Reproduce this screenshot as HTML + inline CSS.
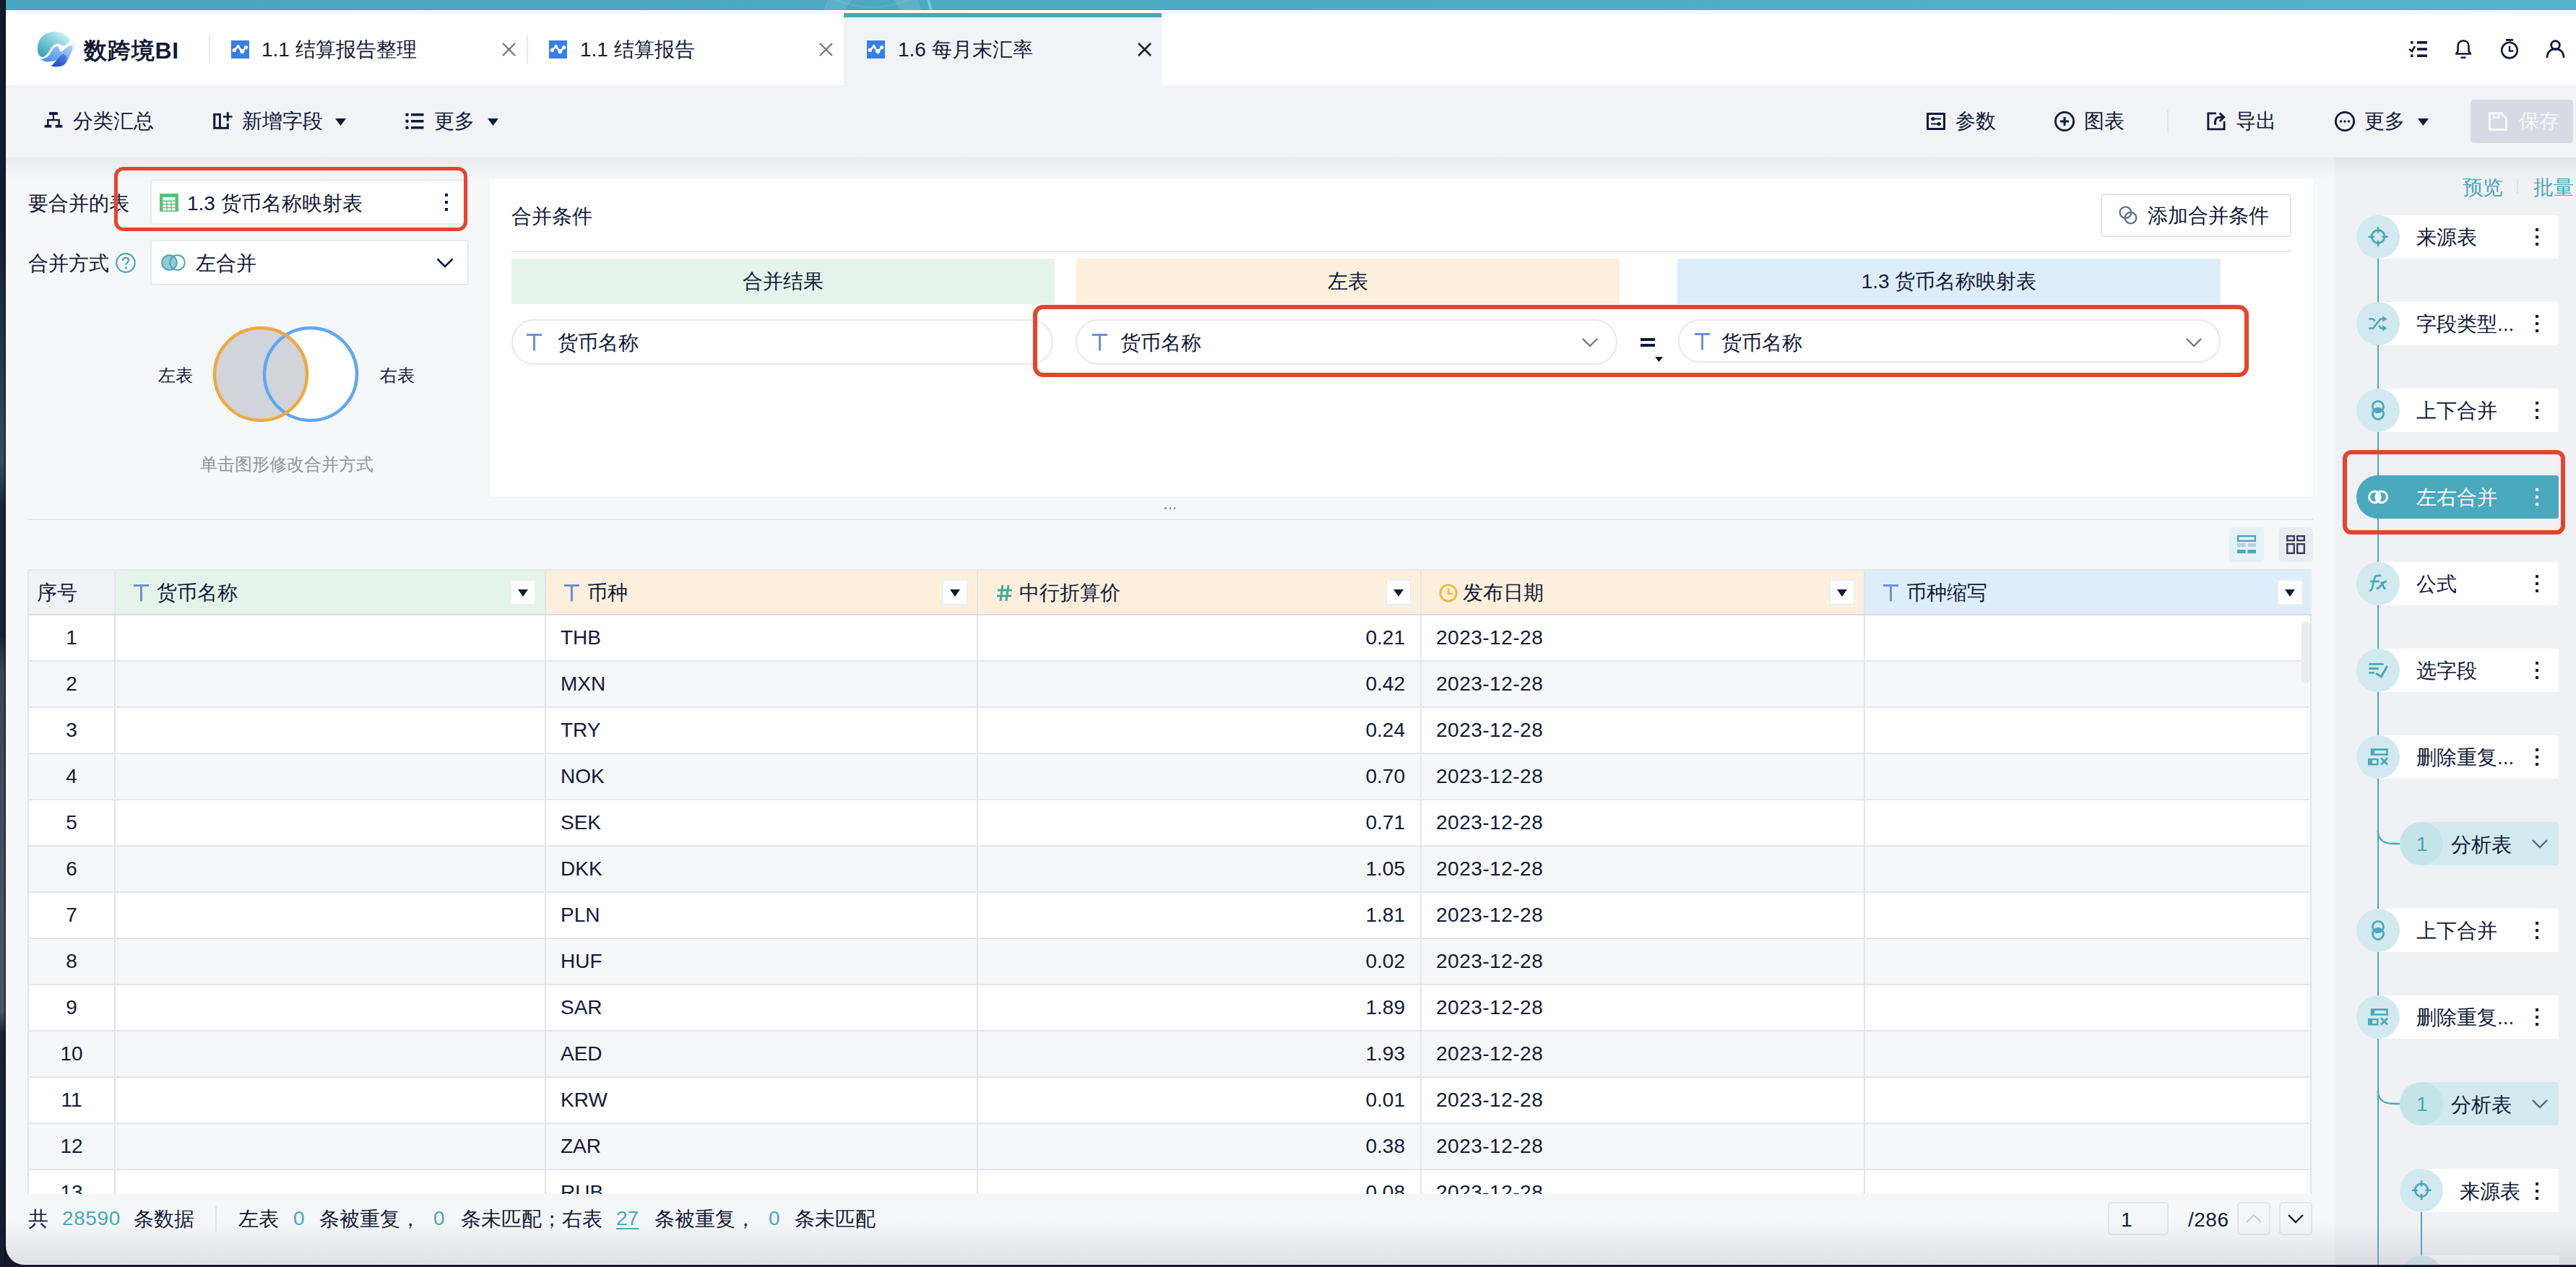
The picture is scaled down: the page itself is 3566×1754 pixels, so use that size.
<!DOCTYPE html><html><head><meta charset="utf-8"><style>
*{margin:0;padding:0;box-sizing:border-box}
html,body{width:3566px;height:1754px;overflow:hidden}
body{background:#131b2c;font-family:"Liberation Sans",sans-serif;position:relative}
.t{position:absolute;white-space:nowrap;line-height:32px}
svg{position:absolute;overflow:visible}
</style></head><body>
<div style="position:absolute;left:0px;top:0px;width:8px;height:1754px;background:linear-gradient(180deg,#121a2c 0px,#141d30 300px,#253349 480px,#3a4a5e 640px,#1c2538 700px,#1a2236 880px,#3d4457 930px,#4a5064 1250px,#4e5467 1400px,#1a2233 1430px,#151d2d 1754px)"></div>
<div style="position:absolute;left:6px;top:0px;width:2px;height:1754px;background:rgba(0,5,20,0.55)"></div>
<div style="position:absolute;left:8px;top:0px;width:3558px;height:1751px;background:#f6f7f9;border-bottom-left-radius:26px;overflow:hidden"></div>
<div style="position:absolute;left:8px;top:218px;width:3558px;height:30px;background:linear-gradient(180deg,rgba(20,30,70,0.055),rgba(20,30,70,0))"></div>
<div style="position:absolute;left:8px;top:0px;width:3558px;height:14px;background:linear-gradient(90deg,#4aa3bf,#4ea9c2 40%,#52b4ca)"></div>
<svg style="left:8px;top:0" width="3558" height="14" viewBox="0 0 3558 14"><circle cx="1200" cy="30" r="55" fill="none" stroke="rgba(255,255,255,0.10)" stroke-width="28"/><path d="M1277 0 L1281 14" stroke="rgba(160,235,240,0.45)" stroke-width="4"/><circle cx="1200" cy="-120" r="130" fill="none" stroke="rgba(255,255,255,0.06)" stroke-width="3"/></svg>
<div style="position:absolute;left:8px;top:14px;width:3558px;height:104px;background:#fff"></div>
<div style="position:absolute;left:8px;top:118px;width:3558px;height:100px;background:#f2f3f7"></div>
<svg style="left:40px;top:36px" width="64" height="64" viewBox="0 0 64 64">
<defs><linearGradient id="lg1" x1="0.1" y1="0.9" x2="0.9" y2="0.1"><stop offset="0" stop-color="#3ea6b8"/><stop offset="0.5" stop-color="#7ccdd9"/><stop offset="1" stop-color="#cdf3f5"/></linearGradient>
<linearGradient id="lg2" x1="0" y1="1" x2="1" y2="0"><stop offset="0" stop-color="#2f7bef"/><stop offset="1" stop-color="#b4d3fa"/></linearGradient>
<linearGradient id="lg3" x1="0" y1="1" x2="1" y2="0"><stop offset="0" stop-color="#1d3fb8"/><stop offset="1" stop-color="#5b87e0"/></linearGradient></defs>
<path d="M13.6 39.4 C11.5 35 11.5 28 13 24 C16 13 26 7.8 35 7.8 C45 7.8 54 13 57.6 21.7 C54 23 51 27 48 27.5 C45 27.8 43 24.5 40.4 24.5 C36 24.5 33 27 30 32 C27 37 23 43 19 43 C16.5 43 14.8 41.5 13.6 39.4 Z" fill="url(#lg1)"/>
<path d="M16.7 45.5 C20 46 25 44.5 29 39 C32 34 35 28.3 38.8 28.3 C42 28.3 42 32 42.8 35 C45.5 36.5 49 33 52 30 C55 27.5 57.5 26.2 60 26.8 C62.5 28 60 35 57 40.4 C55 46 52 52 46 55 C40 57 33 56.5 30.3 55.6 C33 53.5 36 50 39 47.8 C33 48.5 28 50 23.7 49.3 C20.5 48.8 18 47.5 16.7 45.5 Z" fill="url(#lg2)"/>
<path d="M31 55.6 C36 52 39 45 45.5 39.4 C49 38 52 41 52.5 44 C53 49 51 53 46 55 C41 56.8 35 56.5 31 55.6 Z" fill="url(#lg3)"/>
</svg>
<div class="t" style="left:116px;top:54.0px;font-size:32px;color:#141a36;font-weight:bold;letter-spacing:0.8px">数跨境BI</div>
<div style="position:absolute;left:289px;top:48px;width:2px;height:40px;background:#e8e9ee"></div>
<svg style="left:320px;top:55.5px" width="25" height="25" viewBox="0 0 25 25">
<rect width="25" height="25" fill="#3580e6"/>
<path d="M4.3 13.4 L9.6 8.3 L15.3 15.1 L20.6 9.7" fill="none" stroke="#fff" stroke-width="2.6" stroke-linejoin="round"/>
<circle cx="4.3" cy="13.4" r="2.7" fill="#fff"/><circle cx="9.6" cy="8.3" r="2.2" fill="#fff"/><circle cx="15.3" cy="15.1" r="3.1" fill="#fff"/><circle cx="20.6" cy="9.7" r="2.6" fill="#fff"/>
</svg>
<div class="t" style="left:362px;top:53.0px;font-size:28px;color:#121938;font-weight:normal;">1.1 结算报告整理</div>
<svg style="left:695px;top:59px" width="19" height="19" viewBox="0 0 19 19">
<path d="M1 1 L18 18 M18 1 L1 18" stroke="#6e7287" stroke-width="2.2"/></svg>
<div style="position:absolute;left:729px;top:48px;width:2px;height:40px;background:#e8e9ee"></div>
<svg style="left:760px;top:55.5px" width="25" height="25" viewBox="0 0 25 25">
<rect width="25" height="25" fill="#3580e6"/>
<path d="M4.3 13.4 L9.6 8.3 L15.3 15.1 L20.6 9.7" fill="none" stroke="#fff" stroke-width="2.6" stroke-linejoin="round"/>
<circle cx="4.3" cy="13.4" r="2.7" fill="#fff"/><circle cx="9.6" cy="8.3" r="2.2" fill="#fff"/><circle cx="15.3" cy="15.1" r="3.1" fill="#fff"/><circle cx="20.6" cy="9.7" r="2.6" fill="#fff"/>
</svg>
<div class="t" style="left:803px;top:53.0px;font-size:28px;color:#121938;font-weight:normal;">1.1 结算报告</div>
<svg style="left:1134px;top:59px" width="19" height="19" viewBox="0 0 19 19">
<path d="M1 1 L18 18 M18 1 L1 18" stroke="#6e7287" stroke-width="2.2"/></svg>
<div style="position:absolute;left:1168px;top:18px;width:440px;height:100px;background:#f2f3f7"></div>
<div style="position:absolute;left:1168px;top:18px;width:440px;height:6px;background:#4aa6bb"></div>
<svg style="left:1199.6px;top:55.5px" width="25" height="25" viewBox="0 0 25 25">
<rect width="25" height="25" fill="#3580e6"/>
<path d="M4.3 13.4 L9.6 8.3 L15.3 15.1 L20.6 9.7" fill="none" stroke="#fff" stroke-width="2.6" stroke-linejoin="round"/>
<circle cx="4.3" cy="13.4" r="2.7" fill="#fff"/><circle cx="9.6" cy="8.3" r="2.2" fill="#fff"/><circle cx="15.3" cy="15.1" r="3.1" fill="#fff"/><circle cx="20.6" cy="9.7" r="2.6" fill="#fff"/>
</svg>
<div class="t" style="left:1243px;top:53.0px;font-size:28px;color:#121938;font-weight:normal;">1.6 每月末汇率</div>
<svg style="left:1575px;top:59px" width="19" height="19" viewBox="0 0 19 19">
<path d="M1 1 L18 18 M18 1 L1 18" stroke="#1b1f3b" stroke-width="2.6"/></svg>
<svg style="left:3334px;top:56px" width="27" height="24" viewBox="0 0 27 24">
<rect x="3" y="1" width="3.6" height="3.6" fill="#121938"/><rect x="3" y="19.4" width="3.6" height="3.6" fill="#121938"/>
<rect x="12" y="1" width="14" height="3.6" fill="#121938"/><rect x="12" y="10.2" width="14" height="3.6" fill="#121938"/><rect x="12" y="19.4" width="14" height="3.6" fill="#121938"/>
<path d="M1 12 L5 15 L9 8" fill="none" stroke="#121938" stroke-width="2.6"/></svg>
<svg style="left:3398px;top:55px" width="24" height="26" viewBox="0 0 24 26">
<path d="M2 19.5 L4.5 16 L4.5 9 C4.5 4.5 7.5 1.3 12 1.3 C16.5 1.3 19.5 4.5 19.5 9 L19.5 16 L22 19.5 Z" fill="none" stroke="#121938" stroke-width="2.6" stroke-linejoin="round"/>
<rect x="8.5" y="23.5" width="7" height="2.4" fill="#121938"/></svg>
<svg style="left:3461px;top:54px" width="26" height="28" viewBox="0 0 26 28">
<rect x="8" y="0" width="10" height="2.8" fill="#121938"/>
<circle cx="13" cy="15.6" r="10.8" fill="none" stroke="#121938" stroke-width="2.6"/>
<path d="M13 10 L13 16.6 L18.5 16.6" fill="none" stroke="#121938" stroke-width="2.4"/></svg>
<svg style="left:3524px;top:55px" width="27" height="26" viewBox="0 0 27 26">
<circle cx="13.5" cy="7.5" r="5.9" fill="none" stroke="#121938" stroke-width="2.7"/>
<path d="M2 25 C2 17 7 12.6 13.5 12.6 C20 12.6 25 17 25 25" fill="none" stroke="#121938" stroke-width="2.7"/></svg>
<svg style="left:56px;top:150px" width="36" height="32" viewBox="0 0 36 32">
<rect x="12" y="5.2" width="11.9" height="3.8" fill="#121938"/><rect x="16.9" y="8" width="2.1" height="8" fill="#121938"/>
<rect x="9.1" y="15" width="17.7" height="2.3" fill="#121938"/>
<rect x="9.1" y="15" width="2.5" height="9" fill="#121938"/><rect x="24.3" y="15" width="2.5" height="9" fill="#121938"/>
<rect x="5.6" y="22.9" width="9.7" height="3.7" fill="#121938"/><rect x="20.7" y="22.9" width="9.7" height="3.7" fill="#121938"/></svg>
<div class="t" style="left:101px;top:152.0px;font-size:28px;color:#121938;font-weight:normal;">分类汇总</div>
<svg style="left:290px;top:150px" width="40" height="35" viewBox="0 0 40 35">
<path fill-rule="evenodd" d="M5.2 7 L15.9 7 L15.9 25.8 L23.8 25.8 L23.8 21 L26.8 21 L26.8 28.7 L5.2 28.7 Z M8.3 9.8 L13 9.8 L13 25.8 L8.3 25.8 Z" fill="#121938"/>
<rect x="23.8" y="5.2" width="3" height="12.5" fill="#121938"/><rect x="19" y="10.2" width="12.5" height="2.6" fill="#121938"/></svg>
<div class="t" style="left:335px;top:152.0px;font-size:28px;color:#121938;font-weight:normal;">新增字段</div>
<svg style="left:464px;top:164px" width="15" height="10" viewBox="0 0 15 10"><path d="M0 0 L15 0 L7.5 10 Z" fill="#121938"/></svg>
<svg style="left:561px;top:156px" width="26" height="24" viewBox="0 0 26 24">
<circle cx="2.5" cy="2.8" r="2.3" fill="#121938"/><circle cx="2.5" cy="11.8" r="2.3" fill="#121938"/><circle cx="2.5" cy="20.8" r="2.3" fill="#121938"/>
<rect x="8" y="1" width="17.5" height="3.5" fill="#121938"/><rect x="8" y="10" width="17.5" height="3.5" fill="#121938"/><rect x="8" y="19" width="17.5" height="3.5" fill="#121938"/></svg>
<div class="t" style="left:601px;top:152.0px;font-size:28px;color:#121938;font-weight:normal;">更多</div>
<svg style="left:675px;top:164px" width="15" height="10" viewBox="0 0 15 10"><path d="M0 0 L15 0 L7.5 10 Z" fill="#121938"/></svg>
<svg style="left:2667px;top:156px" width="26" height="24" viewBox="0 0 26 24">
<rect x="1.5" y="1.5" width="23" height="21" fill="none" stroke="#121938" stroke-width="3"/>
<path d="M6 8.5 L20 8.5 M6 15.5 L20 15.5" stroke="#121938" stroke-width="2.2"/>
<circle cx="9" cy="8.5" r="2.5" fill="#121938"/><circle cx="17" cy="15.5" r="2.5" fill="#121938"/></svg>
<div class="t" style="left:2707px;top:152.0px;font-size:28px;color:#121938;font-weight:normal;">参数</div>
<svg style="left:2844px;top:154px" width="28" height="28" viewBox="0 0 28 28">
<circle cx="14" cy="14" r="12.6" fill="none" stroke="#121938" stroke-width="2.8"/>
<path d="M14 8 L14 20 M8 14 L20 14" stroke="#121938" stroke-width="3"/></svg>
<div class="t" style="left:2885px;top:152.0px;font-size:28px;color:#121938;font-weight:normal;">图表</div>
<div style="position:absolute;left:3000px;top:152px;width:2px;height:32px;background:#e3e5ea"></div>
<svg style="left:3050px;top:150px" width="36" height="36" viewBox="0 0 36 36">
<path d="M17.9 6.85 L6.8 6.85 L6.8 28.85 L29.1 28.85 L29.1 18" fill="none" stroke="#121938" stroke-width="2.8"/>
<path d="M16.5 22.8 L16.5 18.5 C16.5 14.5 19 12.2 23 12.2 L28.5 12.2" fill="none" stroke="#121938" stroke-width="3"/>
<path d="M22.7 6.5 L28.6 12.2 L22.7 17.9" fill="none" stroke="#121938" stroke-width="3"/></svg>
<div class="t" style="left:3095px;top:152.0px;font-size:28px;color:#121938;font-weight:normal;">导出</div>
<svg style="left:3232px;top:154px" width="28" height="28" viewBox="0 0 28 28">
<circle cx="14" cy="14" r="12.6" fill="none" stroke="#121938" stroke-width="2.8"/>
<circle cx="8.5" cy="14" r="1.7" fill="#121938"/><circle cx="14" cy="14" r="1.7" fill="#121938"/><circle cx="19.5" cy="14" r="1.7" fill="#121938"/></svg>
<div class="t" style="left:3273px;top:152.0px;font-size:28px;color:#121938;font-weight:normal;">更多</div>
<svg style="left:3347px;top:164px" width="15" height="10" viewBox="0 0 15 10"><path d="M0 0 L15 0 L7.5 10 Z" fill="#121938"/></svg>
<div style="position:absolute;left:3420px;top:138px;width:142px;height:60px;background:#d7dae2;border-radius:5px"></div>
<svg style="left:3445px;top:155px" width="26" height="26" viewBox="0 0 26 26">
<path d="M1.5 1.5 L17 1.5 L24.5 9 L24.5 24.5 L1.5 24.5 Z" fill="none" stroke="#f7f8fa" stroke-width="3"/>
<path d="M7 1.5 L7 8 L14 8 L14 1.5" fill="none" stroke="#f7f8fa" stroke-width="2.6"/></svg>
<div class="t" style="left:3487px;top:152.0px;font-size:28px;color:#f7f8fa;font-weight:normal;">保存</div>
<div class="t" style="left:39px;top:266.0px;font-size:28px;color:#121938;font-weight:normal;">要合并的表</div>
<div style="position:absolute;left:208px;top:248px;width:441px;height:63px;background:#fff;border:2px solid #e6e8ed;border-radius:4px"></div>
<svg style="left:221px;top:268px" width="26" height="25" viewBox="0 0 26 25">
<rect width="26" height="25" fill="#5dbf77"/>
<rect x="4.5" y="5" width="17" height="4.5" fill="#fff"/>
<rect x="4.5" y="11" width="4.8" height="3.2" fill="#fff"/><rect x="10.6" y="11" width="4.8" height="3.2" fill="#fff"/><rect x="16.7" y="11" width="4.8" height="3.2" fill="#fff"/>
<rect x="4.5" y="15.6" width="4.8" height="3.2" fill="#fff"/><rect x="10.6" y="15.6" width="4.8" height="3.2" fill="#fff"/><rect x="16.7" y="15.6" width="4.8" height="3.2" fill="#fff"/>
<rect x="4.5" y="20.2" width="4.8" height="3.2" fill="#fff"/><rect x="10.6" y="20.2" width="4.8" height="3.2" fill="#fff"/><rect x="16.7" y="20.2" width="4.8" height="3.2" fill="#fff"/>
</svg>
<div class="t" style="left:259px;top:266.0px;font-size:28px;color:#121938;font-weight:normal;">1.3 货币名称映射表</div>
<div style="position:absolute;left:616px;top:268px;width:3.8px;height:3.8px;background:#121938"></div>
<div style="position:absolute;left:616px;top:278px;width:3.8px;height:3.8px;background:#121938"></div>
<div style="position:absolute;left:616px;top:288px;width:3.8px;height:3.8px;background:#121938"></div>
<div style="position:absolute;left:158px;top:231px;width:489px;height:89px;border:5.5px solid #e8432d;border-radius:13px"></div>
<div class="t" style="left:39px;top:349.0px;font-size:28px;color:#121938;font-weight:normal;">合并方式</div>
<svg style="left:160px;top:350px" width="28" height="28" viewBox="0 0 28 28">
<circle cx="14" cy="14" r="12.8" fill="none" stroke="#4ba7ba" stroke-width="2.2"/>
<path d="M10 11 C10 8.3 11.8 6.8 14 6.8 C16.3 6.8 18 8.3 18 10.6 C18 13.2 14.4 13.6 14.4 16.8" fill="none" stroke="#4ba7ba" stroke-width="2.3"/>
<circle cx="14.3" cy="20.8" r="1.6" fill="#4ba7ba"/></svg>
<div style="position:absolute;left:208px;top:332px;width:441px;height:63px;background:#fff;border:2px solid #e6e8ed;border-radius:4px"></div>
<svg style="left:223px;top:352px" width="34" height="23" viewBox="0 0 34 23">
<circle cx="11.5" cy="11.5" r="10.3" fill="#93cbd4" stroke="#4ba7ba" stroke-width="2"/>
<circle cx="22.5" cy="11.5" r="10.3" fill="none" stroke="#4ba7ba" stroke-width="2"/></svg>
<div class="t" style="left:271px;top:349.0px;font-size:28px;color:#121938;font-weight:normal;">左合并</div>
<svg style="left:604px;top:357px" width="24" height="14" viewBox="0 0 24 14">
<path d="M1.5 1.5 L12 12 L22.5 1.5" fill="none" stroke="#121938" stroke-width="2.6"/></svg>
<svg style="left:290px;top:446px" width="212" height="144" viewBox="0 0 212 144">
<defs><clipPath id="cl"><circle cx="71" cy="72" r="64"/></clipPath></defs>
<circle cx="71" cy="72" r="64" fill="#d1d4db"/>
<circle cx="140" cy="72" r="64" fill="#fff"/>
<circle cx="140" cy="72" r="64" fill="#d1d4db" clip-path="url(#cl)"/>
<circle cx="140" cy="72" r="64" fill="none" stroke="#5ea8f2" stroke-width="4.5"/>
<circle cx="71" cy="72" r="64" fill="none" stroke="#f0a93f" stroke-width="4.5" clip-path="none"/>
</svg>
<div class="t" style="left:219px;top:504.0px;font-size:24px;color:#121938;font-weight:normal;">左表</div>
<div class="t" style="left:526px;top:504.0px;font-size:24px;color:#121938;font-weight:normal;">右表</div>
<div class="t" style="left:277px;top:627.0px;font-size:24px;color:#8e94a3;font-weight:normal;">单击图形修改合并方式</div>
<div style="position:absolute;left:678px;top:248px;width:2524px;height:440px;background:#fff"></div>
<div class="t" style="left:708px;top:284.0px;font-size:28px;color:#121938;font-weight:normal;">合并条件</div>
<div style="position:absolute;left:2908px;top:268px;width:264px;height:60px;background:#fff;border:2px solid #e0e2e8;border-radius:5px"></div>
<svg style="left:2932px;top:284px" width="28" height="28" viewBox="0 0 28 28">
<circle cx="10.4" cy="10.2" r="7.8" fill="none" stroke="#6c7188" stroke-width="2.4"/>
<circle cx="17.5" cy="17.6" r="7.8" fill="none" stroke="#6c7188" stroke-width="2.4"/></svg>
<div class="t" style="left:2973px;top:283.0px;font-size:28px;color:#121938;font-weight:normal;">添加合并条件</div>
<div style="position:absolute;left:708px;top:347px;width:2464px;height:2px;background:#e6e8ed"></div>
<div style="position:absolute;left:708px;top:358px;width:752px;height:63px;background:#e5f4ea"></div>
<div style="position:absolute;left:1490px;top:358px;width:752px;height:63px;background:#fcf0dd"></div>
<div style="position:absolute;left:2322px;top:358px;width:752px;height:63px;background:#ddeefa"></div>
<div class="t" style="left:708px;top:374px;width:752px;text-align:center;font-size:28px;color:#121938">合并结果</div>
<div class="t" style="left:1490px;top:374px;width:752px;text-align:center;font-size:28px;color:#121938">左表</div>
<div class="t" style="left:2322px;top:374px;width:752px;text-align:center;font-size:28px;color:#121938">1.3 货币名称映射表</div>
<div style="position:absolute;left:708px;top:442px;width:750px;height:63px;background:#fff;border:2px solid #e6e8ed;border-radius:31.5px"></div>
<svg style="left:729px;top:462px" width="22" height="24" viewBox="0 0 22 24">
<path d="M0 1.5 L21 1.5 M10.5 1.5 L10.5 23.5" fill="none" stroke="#6a90d8" stroke-width="3"/></svg>
<div class="t" style="left:772px;top:459.0px;font-size:28px;color:#121938;font-weight:normal;">货币名称</div>
<div style="position:absolute;left:1489px;top:442px;width:750px;height:63px;background:#fff;border:2px solid #e6e8ed;border-radius:31.5px"></div>
<svg style="left:1512px;top:462px" width="22" height="24" viewBox="0 0 22 24">
<path d="M0 1.5 L21 1.5 M10.5 1.5 L10.5 23.5" fill="none" stroke="#6a90d8" stroke-width="3"/></svg>
<div class="t" style="left:1551px;top:459.0px;font-size:28px;color:#121938;font-weight:normal;">货币名称</div>
<svg style="left:2190px;top:468px" width="22" height="12" viewBox="0 0 22 12">
<path d="M1 1 L11.0 11 L21 1" fill="none" stroke="#6b7086" stroke-width="2.2"/></svg>
<div style="position:absolute;left:2271px;top:468px;width:20px;height:3.6px;background:#121938"></div>
<div style="position:absolute;left:2271px;top:476px;width:20px;height:3.6px;background:#121938"></div>
<svg style="left:2291px;top:494px" width="11" height="7" viewBox="0 0 11 7"><path d="M0 0 L11 0 L5.5 7 Z" fill="#121938"/></svg>
<div style="position:absolute;left:2323px;top:442px;width:751px;height:60px;background:#fff;border:2px solid #e6e8ed;border-radius:30.0px"></div>
<svg style="left:2346px;top:461px" width="22" height="24" viewBox="0 0 22 24">
<path d="M0 1.5 L21 1.5 M10.5 1.5 L10.5 23.5" fill="none" stroke="#6a90d8" stroke-width="3"/></svg>
<div class="t" style="left:2383px;top:459.0px;font-size:28px;color:#121938;font-weight:normal;">货币名称</div>
<svg style="left:3026px;top:468px" width="22" height="12" viewBox="0 0 22 12">
<path d="M1 1 L11.0 11 L21 1" fill="none" stroke="#6b7086" stroke-width="2.2"/></svg>
<div style="position:absolute;left:1430px;top:422px;width:1683px;height:100px;border:6px solid #e8432d;border-radius:14px"></div>
<div style="position:absolute;left:1612.3px;top:702.2px;width:2.6px;height:2.6px;background:#8c90a2"></div>
<div style="position:absolute;left:1618.6px;top:702.2px;width:2.6px;height:2.6px;background:#8c90a2"></div>
<div style="position:absolute;left:1624.8999999999999px;top:702.2px;width:2.6px;height:2.6px;background:#8c90a2"></div>
<div style="position:absolute;left:38px;top:718px;width:3164px;height:2px;background:#e3e5ea"></div>
<div style="position:absolute;left:3086px;top:730px;width:48px;height:48px;background:#e3f2f5;border-radius:5px"></div>
<svg style="left:3097px;top:741px" width="26" height="26" viewBox="0 0 26 26">
<rect x="1.2" y="1.2" width="23.6" height="6.6" fill="none" stroke="#4ba7ba" stroke-width="2.4"/>
<rect x="0" y="11" width="11.5" height="5" fill="#a9d6df"/><rect x="14.5" y="11" width="11.5" height="5" fill="#a9d6df"/>
<rect x="0" y="20" width="11.5" height="5" fill="#4ba7ba"/><rect x="14.5" y="20" width="11.5" height="5" fill="#4ba7ba"/></svg>
<div style="position:absolute;left:3154px;top:730px;width:48px;height:48px;background:#ebecf0;border-radius:5px"></div>
<svg style="left:3165px;top:741px" width="26" height="26" viewBox="0 0 26 26">
<rect x="1.2" y="1.2" width="9.6" height="6" fill="none" stroke="#3a3f5c" stroke-width="2.4"/><rect x="15.2" y="1.2" width="9.6" height="6" fill="none" stroke="#3a3f5c" stroke-width="2.4"/>
<rect x="1.2" y="12.2" width="9.6" height="12.6" fill="none" stroke="#3a3f5c" stroke-width="2.4"/><rect x="15.2" y="12.2" width="9.6" height="12.6" fill="none" stroke="#3a3f5c" stroke-width="2.4"/></svg>
<div style="position:absolute;left:38px;top:788px;width:3162px;height:2px;background:#e3e5ea"></div>
<div style="position:absolute;left:38px;top:790px;width:120px;height:60px;background:#f1f2f6"></div>
<div style="position:absolute;left:158px;top:790px;width:596px;height:60px;background:#e5f4ea"></div>
<div style="position:absolute;left:754px;top:790px;width:598px;height:60px;background:#fcf0dd"></div>
<div style="position:absolute;left:1352px;top:790px;width:614px;height:60px;background:#fcf0dd"></div>
<div style="position:absolute;left:1966px;top:790px;width:614px;height:60px;background:#fcf0dd"></div>
<div style="position:absolute;left:2580px;top:790px;width:620px;height:60px;background:#ddeefa"></div>
<div style="position:absolute;left:38px;top:850px;width:3162px;height:2px;background:#d9dce3"></div>
<div class="t" style="left:51px;top:805.0px;font-size:28px;color:#121938;font-weight:normal;">序号</div>
<svg style="left:185px;top:809px" width="22" height="24" viewBox="0 0 22 24">
<path d="M0 1.5 L21 1.5 M10.5 1.5 L10.5 23.5" fill="none" stroke="#6a90d8" stroke-width="3"/></svg>
<div class="t" style="left:217px;top:805.0px;font-size:28px;color:#121938;font-weight:normal;">货币名称</div>
<div style="position:absolute;left:706px;top:802px;width:36px;height:36px;background:#fff;border:2px solid #eceef2"></div>
<svg style="left:717px;top:816px" width="14" height="10" viewBox="0 0 14 10"><path d="M0 0 L14 0 L7.0 10 Z" fill="#121938"/></svg>
<svg style="left:781px;top:809px" width="22" height="24" viewBox="0 0 22 24">
<path d="M0 1.5 L21 1.5 M10.5 1.5 L10.5 23.5" fill="none" stroke="#6a90d8" stroke-width="3"/></svg>
<div class="t" style="left:813px;top:805.0px;font-size:28px;color:#121938;font-weight:normal;">币种</div>
<div style="position:absolute;left:1304px;top:802px;width:36px;height:36px;background:#fff;border:2px solid #eceef2"></div>
<svg style="left:1315px;top:816px" width="14" height="10" viewBox="0 0 14 10"><path d="M0 0 L14 0 L7.0 10 Z" fill="#121938"/></svg>
<svg style="left:1379px;top:809px" width="24" height="24" viewBox="0 0 24 24">
<path d="M9 1 L6 23 M17 1 L14 23 M2 8 L22 8 M1 16 L21 16" fill="none" stroke="#4aa89a" stroke-width="3"/></svg>
<div class="t" style="left:1411px;top:805.0px;font-size:28px;color:#121938;font-weight:normal;">中行折算价</div>
<div style="position:absolute;left:1918px;top:802px;width:36px;height:36px;background:#fff;border:2px solid #eceef2"></div>
<svg style="left:1929px;top:816px" width="14" height="10" viewBox="0 0 14 10"><path d="M0 0 L14 0 L7.0 10 Z" fill="#121938"/></svg>
<svg style="left:1992px;top:808px" width="26" height="26" viewBox="0 0 26 26">
<circle cx="13" cy="13" r="11.2" fill="none" stroke="#f2b63c" stroke-width="2.8"/>
<path d="M13 6.5 L13 14 L19 14" fill="none" stroke="#f2b63c" stroke-width="2.6"/></svg>
<div class="t" style="left:2025px;top:805.0px;font-size:28px;color:#121938;font-weight:normal;">发布日期</div>
<div style="position:absolute;left:2532px;top:802px;width:36px;height:36px;background:#fff;border:2px solid #eceef2"></div>
<svg style="left:2543px;top:816px" width="14" height="10" viewBox="0 0 14 10"><path d="M0 0 L14 0 L7.0 10 Z" fill="#121938"/></svg>
<svg style="left:2607px;top:809px" width="22" height="24" viewBox="0 0 22 24">
<path d="M0 1.5 L21 1.5 M10.5 1.5 L10.5 23.5" fill="none" stroke="#6a90d8" stroke-width="3"/></svg>
<div class="t" style="left:2639px;top:805.0px;font-size:28px;color:#121938;font-weight:normal;">币种缩写</div>
<div style="position:absolute;left:3152px;top:802px;width:36px;height:36px;background:#fff;border:2px solid #eceef2"></div>
<svg style="left:3163px;top:816px" width="14" height="10" viewBox="0 0 14 10"><path d="M0 0 L14 0 L7.0 10 Z" fill="#121938"/></svg>
<div style="position:absolute;left:38px;top:852px;width:3162px;height:801px;overflow:hidden">
<div style="position:absolute;left:0;top:0px;width:3162px;height:62px;background:#ffffff"></div>
<div style="position:absolute;left:0;top:62px;width:3162px;height:2px;background:#e3e5ea"></div>
<div class="t" style="left:2px;top:15px;width:118px;text-align:center;font-size:28px;color:#121938">1</div>
<div class="t" style="left:738px;top:15px;font-size:28px;color:#121938">THB</div>
<div class="t" style="left:1316px;top:15px;width:591px;text-align:right;font-size:28px;color:#121938">0.21</div>
<div class="t" style="left:1950px;top:15px;font-size:28px;color:#121938;letter-spacing:0.5px">2023-12-28</div>
<div style="position:absolute;left:0;top:64px;width:3162px;height:62px;background:#f6f7f9"></div>
<div style="position:absolute;left:0;top:126px;width:3162px;height:2px;background:#e3e5ea"></div>
<div class="t" style="left:2px;top:79px;width:118px;text-align:center;font-size:28px;color:#121938">2</div>
<div class="t" style="left:738px;top:79px;font-size:28px;color:#121938">MXN</div>
<div class="t" style="left:1316px;top:79px;width:591px;text-align:right;font-size:28px;color:#121938">0.42</div>
<div class="t" style="left:1950px;top:79px;font-size:28px;color:#121938;letter-spacing:0.5px">2023-12-28</div>
<div style="position:absolute;left:0;top:128px;width:3162px;height:62px;background:#ffffff"></div>
<div style="position:absolute;left:0;top:190px;width:3162px;height:2px;background:#e3e5ea"></div>
<div class="t" style="left:2px;top:143px;width:118px;text-align:center;font-size:28px;color:#121938">3</div>
<div class="t" style="left:738px;top:143px;font-size:28px;color:#121938">TRY</div>
<div class="t" style="left:1316px;top:143px;width:591px;text-align:right;font-size:28px;color:#121938">0.24</div>
<div class="t" style="left:1950px;top:143px;font-size:28px;color:#121938;letter-spacing:0.5px">2023-12-28</div>
<div style="position:absolute;left:0;top:192px;width:3162px;height:62px;background:#f6f7f9"></div>
<div style="position:absolute;left:0;top:254px;width:3162px;height:2px;background:#e3e5ea"></div>
<div class="t" style="left:2px;top:207px;width:118px;text-align:center;font-size:28px;color:#121938">4</div>
<div class="t" style="left:738px;top:207px;font-size:28px;color:#121938">NOK</div>
<div class="t" style="left:1316px;top:207px;width:591px;text-align:right;font-size:28px;color:#121938">0.70</div>
<div class="t" style="left:1950px;top:207px;font-size:28px;color:#121938;letter-spacing:0.5px">2023-12-28</div>
<div style="position:absolute;left:0;top:256px;width:3162px;height:62px;background:#ffffff"></div>
<div style="position:absolute;left:0;top:318px;width:3162px;height:2px;background:#e3e5ea"></div>
<div class="t" style="left:2px;top:271px;width:118px;text-align:center;font-size:28px;color:#121938">5</div>
<div class="t" style="left:738px;top:271px;font-size:28px;color:#121938">SEK</div>
<div class="t" style="left:1316px;top:271px;width:591px;text-align:right;font-size:28px;color:#121938">0.71</div>
<div class="t" style="left:1950px;top:271px;font-size:28px;color:#121938;letter-spacing:0.5px">2023-12-28</div>
<div style="position:absolute;left:0;top:320px;width:3162px;height:62px;background:#f6f7f9"></div>
<div style="position:absolute;left:0;top:382px;width:3162px;height:2px;background:#e3e5ea"></div>
<div class="t" style="left:2px;top:335px;width:118px;text-align:center;font-size:28px;color:#121938">6</div>
<div class="t" style="left:738px;top:335px;font-size:28px;color:#121938">DKK</div>
<div class="t" style="left:1316px;top:335px;width:591px;text-align:right;font-size:28px;color:#121938">1.05</div>
<div class="t" style="left:1950px;top:335px;font-size:28px;color:#121938;letter-spacing:0.5px">2023-12-28</div>
<div style="position:absolute;left:0;top:384px;width:3162px;height:62px;background:#ffffff"></div>
<div style="position:absolute;left:0;top:446px;width:3162px;height:2px;background:#e3e5ea"></div>
<div class="t" style="left:2px;top:399px;width:118px;text-align:center;font-size:28px;color:#121938">7</div>
<div class="t" style="left:738px;top:399px;font-size:28px;color:#121938">PLN</div>
<div class="t" style="left:1316px;top:399px;width:591px;text-align:right;font-size:28px;color:#121938">1.81</div>
<div class="t" style="left:1950px;top:399px;font-size:28px;color:#121938;letter-spacing:0.5px">2023-12-28</div>
<div style="position:absolute;left:0;top:448px;width:3162px;height:62px;background:#f6f7f9"></div>
<div style="position:absolute;left:0;top:510px;width:3162px;height:2px;background:#e3e5ea"></div>
<div class="t" style="left:2px;top:463px;width:118px;text-align:center;font-size:28px;color:#121938">8</div>
<div class="t" style="left:738px;top:463px;font-size:28px;color:#121938">HUF</div>
<div class="t" style="left:1316px;top:463px;width:591px;text-align:right;font-size:28px;color:#121938">0.02</div>
<div class="t" style="left:1950px;top:463px;font-size:28px;color:#121938;letter-spacing:0.5px">2023-12-28</div>
<div style="position:absolute;left:0;top:512px;width:3162px;height:62px;background:#ffffff"></div>
<div style="position:absolute;left:0;top:574px;width:3162px;height:2px;background:#e3e5ea"></div>
<div class="t" style="left:2px;top:527px;width:118px;text-align:center;font-size:28px;color:#121938">9</div>
<div class="t" style="left:738px;top:527px;font-size:28px;color:#121938">SAR</div>
<div class="t" style="left:1316px;top:527px;width:591px;text-align:right;font-size:28px;color:#121938">1.89</div>
<div class="t" style="left:1950px;top:527px;font-size:28px;color:#121938;letter-spacing:0.5px">2023-12-28</div>
<div style="position:absolute;left:0;top:576px;width:3162px;height:62px;background:#f6f7f9"></div>
<div style="position:absolute;left:0;top:638px;width:3162px;height:2px;background:#e3e5ea"></div>
<div class="t" style="left:2px;top:591px;width:118px;text-align:center;font-size:28px;color:#121938">10</div>
<div class="t" style="left:738px;top:591px;font-size:28px;color:#121938">AED</div>
<div class="t" style="left:1316px;top:591px;width:591px;text-align:right;font-size:28px;color:#121938">1.93</div>
<div class="t" style="left:1950px;top:591px;font-size:28px;color:#121938;letter-spacing:0.5px">2023-12-28</div>
<div style="position:absolute;left:0;top:640px;width:3162px;height:62px;background:#ffffff"></div>
<div style="position:absolute;left:0;top:702px;width:3162px;height:2px;background:#e3e5ea"></div>
<div class="t" style="left:2px;top:655px;width:118px;text-align:center;font-size:28px;color:#121938">11</div>
<div class="t" style="left:738px;top:655px;font-size:28px;color:#121938">KRW</div>
<div class="t" style="left:1316px;top:655px;width:591px;text-align:right;font-size:28px;color:#121938">0.01</div>
<div class="t" style="left:1950px;top:655px;font-size:28px;color:#121938;letter-spacing:0.5px">2023-12-28</div>
<div style="position:absolute;left:0;top:704px;width:3162px;height:62px;background:#f6f7f9"></div>
<div style="position:absolute;left:0;top:766px;width:3162px;height:2px;background:#e3e5ea"></div>
<div class="t" style="left:2px;top:719px;width:118px;text-align:center;font-size:28px;color:#121938">12</div>
<div class="t" style="left:738px;top:719px;font-size:28px;color:#121938">ZAR</div>
<div class="t" style="left:1316px;top:719px;width:591px;text-align:right;font-size:28px;color:#121938">0.38</div>
<div class="t" style="left:1950px;top:719px;font-size:28px;color:#121938;letter-spacing:0.5px">2023-12-28</div>
<div style="position:absolute;left:0;top:768px;width:3162px;height:62px;background:#ffffff"></div>
<div style="position:absolute;left:0;top:830px;width:3162px;height:2px;background:#e3e5ea"></div>
<div class="t" style="left:2px;top:783px;width:118px;text-align:center;font-size:28px;color:#121938">13</div>
<div class="t" style="left:738px;top:783px;font-size:28px;color:#121938">RUB</div>
<div class="t" style="left:1316px;top:783px;width:591px;text-align:right;font-size:28px;color:#121938">0.08</div>
<div class="t" style="left:1950px;top:783px;font-size:28px;color:#121938;letter-spacing:0.5px">2023-12-28</div>
<div style="position:absolute;left:120px;top:0;width:2px;height:801px;background:#e3e5ea"></div>
<div style="position:absolute;left:716px;top:0;width:2px;height:801px;background:#e3e5ea"></div>
<div style="position:absolute;left:1314px;top:0;width:2px;height:801px;background:#e3e5ea"></div>
<div style="position:absolute;left:1928px;top:0;width:2px;height:801px;background:#e3e5ea"></div>
<div style="position:absolute;left:2542px;top:0;width:2px;height:801px;background:#e3e5ea"></div>
</div>
<div style="position:absolute;left:158px;top:790px;width:2px;height:60px;background:#e3e5ea"></div>
<div style="position:absolute;left:754px;top:790px;width:2px;height:60px;background:#e3e5ea"></div>
<div style="position:absolute;left:1352px;top:790px;width:2px;height:60px;background:#e3e5ea"></div>
<div style="position:absolute;left:1966px;top:790px;width:2px;height:60px;background:#e3e5ea"></div>
<div style="position:absolute;left:2580px;top:790px;width:2px;height:60px;background:#e3e5ea"></div>
<div style="position:absolute;left:38px;top:788px;width:2px;height:865px;background:#e3e5ea"></div>
<div style="position:absolute;left:3198px;top:852px;width:2px;height:801px;background:#e3e5ea"></div>
<div style="position:absolute;left:3186px;top:860px;width:12px;height:86px;background:#ececf0;border-radius:6px"></div>
<div class="t" style="left:39px;top:1672.0px;font-size:28px;color:#121938;font-weight:normal;">共</div>
<div class="t" style="left:86px;top:1671.0px;font-size:28px;color:#4ba7ba;letter-spacing:0.6px">28590</div>
<div class="t" style="left:185px;top:1672.0px;font-size:28px;color:#121938;font-weight:normal;">条数据</div>
<div style="position:absolute;left:298px;top:1670px;width:2px;height:36px;background:#e1e3e8"></div>
<div class="t" style="left:330px;top:1672.0px;font-size:28px;color:#121938;font-weight:normal;">左表</div>
<div class="t" style="left:406px;top:1671.0px;font-size:28px;color:#4ba7ba;">0</div>
<div class="t" style="left:442px;top:1672.0px;font-size:28px;color:#121938;font-weight:normal;">条被重复，</div>
<div class="t" style="left:600px;top:1671.0px;font-size:28px;color:#4ba7ba;">0</div>
<div class="t" style="left:638px;top:1672.0px;font-size:28px;color:#121938;font-weight:normal;">条未匹配；右表</div>
<div class="t" style="left:853px;top:1671.0px;font-size:28px;color:#4ba7ba;text-decoration:underline;text-underline-offset:4px;text-decoration-thickness:2px">27</div>
<div class="t" style="left:906px;top:1672.0px;font-size:28px;color:#121938;font-weight:normal;">条被重复，</div>
<div class="t" style="left:1064px;top:1671.0px;font-size:28px;color:#4ba7ba;">0</div>
<div class="t" style="left:1100px;top:1672.0px;font-size:28px;color:#121938;font-weight:normal;">条未匹配</div>
<div style="position:absolute;left:2918px;top:1664px;width:84px;height:46px;background:#f5f6f8;border:2px solid #e2e4e9;border-radius:5px"></div>
<div class="t" style="left:2936px;top:1673.0px;font-size:28px;color:#121938;">1</div>
<div class="t" style="left:3029px;top:1673.0px;font-size:28px;color:#121938;letter-spacing:0.5px">/286</div>
<div style="position:absolute;left:3097px;top:1664px;width:46px;height:46px;background:#f5f6f8;border:2px solid #e2e4e9;border-radius:5px"></div>
<svg style="left:3109px;top:1681px" width="22" height="12" viewBox="0 0 22 12"><path d="M1 11 L11 1 L21 11" fill="none" stroke="#c9ccd4" stroke-width="2.2"/></svg>
<div style="position:absolute;left:3155px;top:1664px;width:46px;height:46px;background:#f5f6f8;border:2px solid #e2e4e9;border-radius:5px"></div>
<svg style="left:3167px;top:1681px" width="22" height="12" viewBox="0 0 22 12"><path d="M1 1 L11 11 L21 1" fill="none" stroke="#121938" stroke-width="2.4"/></svg>
<div style="position:absolute;left:3232px;top:218px;width:334px;height:1533px;background:#f0f1f5"></div>
<div style="position:absolute;left:3232px;top:218px;width:334px;height:24px;background:linear-gradient(180deg,rgba(200,203,212,0.35),rgba(200,203,212,0))"></div>
<div class="t" style="left:3409px;top:244.0px;font-size:28px;color:#4ba7ba;font-weight:normal;">预览</div>
<div style="position:absolute;left:3484px;top:248px;width:2px;height:20px;background:#dfe1e6"></div>
<div class="t" style="left:3507px;top:244.0px;font-size:28px;color:#4ba7ba;font-weight:normal;">批量</div>
<div style="position:absolute;left:3291px;top:328px;width:2.3px;height:1430px;background:#4ba7ba"></div>
<div style="position:absolute;left:3292px;top:298px;width:250px;height:60px;background:#fff;border-radius:4px"></div>
<div style="position:absolute;left:3262px;top:298px;width:60px;height:60px;background:#d2eaef;border-radius:50%"></div>
<svg style="left:3265px;top:300px" width="55" height="55" viewBox="0 0 55 55"><circle cx="27.1" cy="27.6" r="8.9" fill="none" stroke="#4ba7ba" stroke-width="2.8"/>
<path d="M27.1 14.3 L27.1 22.6 M27.1 32.8 L27.1 41.2 M13.6 27.8 L21.8 27.8 M32.3 27.8 L40.6 27.8" stroke="#4ba7ba" stroke-width="2.6"/></svg>
<div class="t" style="left:3345px;top:313.0px;font-size:28px;color:#121938;font-weight:normal;">来源表</div>
<div style="position:absolute;left:3510px;top:316px;width:3.9px;height:3.9px;background:#121938"></div>
<div style="position:absolute;left:3510px;top:326px;width:3.9px;height:3.9px;background:#121938"></div>
<div style="position:absolute;left:3510px;top:336px;width:3.9px;height:3.9px;background:#121938"></div>
<div style="position:absolute;left:3292px;top:418px;width:250px;height:60px;background:#fff;border-radius:4px"></div>
<div style="position:absolute;left:3262px;top:418px;width:60px;height:60px;background:#d2eaef;border-radius:50%"></div>
<svg style="left:3265px;top:420px" width="55" height="55" viewBox="0 0 55 55"><path d="M14.3 21.5 L20 21.5 L22.8 24.6 M14.3 34.5 L20.2 34.5 L30.4 21.5 L34 21.5 M28.3 30.8 L31 34.3 L34 34.3" fill="none" stroke="#4ba7ba" stroke-width="2.7"/>
<path d="M33.2 16.9 L39.4 21.5 L33.2 26 Z M33.2 29.9 L39.4 34.3 L33.2 38.8 Z" fill="#4ba7ba"/></svg>
<div class="t" style="left:3345px;top:433.0px;font-size:28px;color:#121938;font-weight:normal;">字段类型...</div>
<div style="position:absolute;left:3510px;top:436px;width:3.9px;height:3.9px;background:#121938"></div>
<div style="position:absolute;left:3510px;top:446px;width:3.9px;height:3.9px;background:#121938"></div>
<div style="position:absolute;left:3510px;top:456px;width:3.9px;height:3.9px;background:#121938"></div>
<div style="position:absolute;left:3292px;top:538px;width:250px;height:60px;background:#fff;border-radius:4px"></div>
<div style="position:absolute;left:3262px;top:538px;width:60px;height:60px;background:#d2eaef;border-radius:50%"></div>
<svg style="left:3265px;top:540px" width="55" height="55" viewBox="0 0 55 55"><defs><clipPath id="ud568"><circle cx="27" cy="22.9" r="9"/></clipPath></defs>
<circle cx="27" cy="33" r="9" fill="#4ba7ba" clip-path="url(#ud568)"/>
<circle cx="27" cy="22.9" r="7.6" fill="none" stroke="#4ba7ba" stroke-width="2.8"/>
<circle cx="27" cy="33" r="7.6" fill="none" stroke="#4ba7ba" stroke-width="2.8"/></svg>
<div class="t" style="left:3345px;top:553.0px;font-size:28px;color:#121938;font-weight:normal;">上下合并</div>
<div style="position:absolute;left:3510px;top:556px;width:3.9px;height:3.9px;background:#121938"></div>
<div style="position:absolute;left:3510px;top:566px;width:3.9px;height:3.9px;background:#121938"></div>
<div style="position:absolute;left:3510px;top:576px;width:3.9px;height:3.9px;background:#121938"></div>
<div style="position:absolute;left:3262px;top:658px;width:280px;height:60px;background:#4aa9bd;border-radius:30px 4px 4px 30px"></div>
<svg style="left:3265px;top:660px" width="55" height="55" viewBox="0 0 55 55"><defs><clipPath id="lr688"><circle cx="22.3" cy="28" r="9.2"/></clipPath></defs>
<circle cx="31.8" cy="28" r="9.2" fill="#fff" clip-path="url(#lr688)"/>
<circle cx="22.3" cy="28" r="7.7" fill="none" stroke="#fff" stroke-width="3"/>
<circle cx="31.8" cy="28" r="7.7" fill="none" stroke="#fff" stroke-width="3"/></svg>
<div class="t" style="left:3345px;top:673.0px;font-size:28px;color:#fff;font-weight:normal;">左右合并</div>
<div style="position:absolute;left:3510px;top:676px;width:3.9px;height:3.9px;background:#fff"></div>
<div style="position:absolute;left:3510px;top:686px;width:3.9px;height:3.9px;background:#fff"></div>
<div style="position:absolute;left:3510px;top:696px;width:3.9px;height:3.9px;background:#fff"></div>
<div style="position:absolute;left:3292px;top:778px;width:250px;height:60px;background:#fff;border-radius:4px"></div>
<div style="position:absolute;left:3262px;top:778px;width:60px;height:60px;background:#d2eaef;border-radius:50%"></div>
<svg style="left:3265px;top:780px" width="55" height="55" viewBox="0 0 55 55"><path d="M14.8 37.8 C17.5 37.8 18.4 36.3 19 33.5 L22.3 19.8 C23 17.3 24.6 16.8 27 16.8 L31.4 16.8" fill="none" stroke="#4ba7ba" stroke-width="2.7"/>
<path d="M16 24.8 L29 24.8 M24.6 34.4 L27.4 34.4 L35.8 25.4 L39 24.8 M31.2 25.4 L35.6 34.4 L37.8 34.4" fill="none" stroke="#4ba7ba" stroke-width="2.7"/></svg>
<div class="t" style="left:3345px;top:793.0px;font-size:28px;color:#121938;font-weight:normal;">公式</div>
<div style="position:absolute;left:3510px;top:796px;width:3.9px;height:3.9px;background:#121938"></div>
<div style="position:absolute;left:3510px;top:806px;width:3.9px;height:3.9px;background:#121938"></div>
<div style="position:absolute;left:3510px;top:816px;width:3.9px;height:3.9px;background:#121938"></div>
<div style="position:absolute;left:3292px;top:898px;width:250px;height:60px;background:#fff;border-radius:4px"></div>
<div style="position:absolute;left:3262px;top:898px;width:60px;height:60px;background:#d2eaef;border-radius:50%"></div>
<svg style="left:3265px;top:900px" width="55" height="55" viewBox="0 0 55 55"><path d="M14.3 19.4 L34.7 19.4 M14.3 25.5 L28 25.5 M14.3 31.4 L21.9 31.4" stroke="#4ba7ba" stroke-width="2.8"/>
<path d="M24.1 32.3 L31.5 36.6 L39.8 22" fill="none" stroke="#4ba7ba" stroke-width="3.1"/></svg>
<div class="t" style="left:3345px;top:913.0px;font-size:28px;color:#121938;font-weight:normal;">选字段</div>
<div style="position:absolute;left:3510px;top:916px;width:3.9px;height:3.9px;background:#121938"></div>
<div style="position:absolute;left:3510px;top:926px;width:3.9px;height:3.9px;background:#121938"></div>
<div style="position:absolute;left:3510px;top:936px;width:3.9px;height:3.9px;background:#121938"></div>
<div style="position:absolute;left:3292px;top:1018px;width:250px;height:60px;background:#fff;border-radius:4px"></div>
<div style="position:absolute;left:3262px;top:1018px;width:60px;height:60px;background:#d2eaef;border-radius:50%"></div>
<svg style="left:3265px;top:1020px" width="55" height="55" viewBox="0 0 55 55"><path fill-rule="evenodd" d="M16.7 16.3 L40.8 16.3 L40.8 25.8 L16.7 25.8 Z M22.1 19.1 L38.2 19.1 L38.2 23.2 L22.1 23.2 Z" fill="#4ba7ba"/>
<path fill-rule="evenodd" d="M13 30 L27.6 30 L27.6 39.5 L13 39.5 Z M18.9 32.3 L25.2 32.3 L25.2 37.1 L18.9 37.1 Z" fill="#4ba7ba"/>
<path d="M31 29.6 L40.2 38.4 M40.2 29.6 L31 38.4" stroke="#4ba7ba" stroke-width="2.8"/></svg>
<div class="t" style="left:3345px;top:1033.0px;font-size:28px;color:#121938;font-weight:normal;">删除重复...</div>
<div style="position:absolute;left:3510px;top:1036px;width:3.9px;height:3.9px;background:#121938"></div>
<div style="position:absolute;left:3510px;top:1046px;width:3.9px;height:3.9px;background:#121938"></div>
<div style="position:absolute;left:3510px;top:1056px;width:3.9px;height:3.9px;background:#121938"></div>
<svg style="left:3290.35px;top:1128px" width="34" height="42" viewBox="0 0 34 42">
<path d="M1.8 22 L1.8 23 C1.8 34 10 40 24 40 L34 40" fill="none" stroke="#4ba7ba" stroke-width="2.3"/></svg>
<div style="position:absolute;left:3352px;top:1138px;width:190px;height:60px;background:#d2eaef;border-radius:0 4px 4px 0"></div>
<div style="position:absolute;left:3322px;top:1138px;width:60px;height:60px;background:#c4e4ea;border-radius:50%"></div>
<div class="t" style="left:3345px;top:1153.0px;font-size:28px;color:#4ba7ba;">1</div>
<div class="t" style="left:3393px;top:1154.0px;font-size:28px;color:#121938;font-weight:normal;">分析表</div>
<svg style="left:3505px;top:1162px" width="22" height="12" viewBox="0 0 22 12">
<path d="M1 1 L11.0 11 L21 1" fill="none" stroke="#5c6380" stroke-width="2.4"/></svg>
<div style="position:absolute;left:3292px;top:1258px;width:250px;height:60px;background:#fff;border-radius:4px"></div>
<div style="position:absolute;left:3262px;top:1258px;width:60px;height:60px;background:#d2eaef;border-radius:50%"></div>
<svg style="left:3265px;top:1260px" width="55" height="55" viewBox="0 0 55 55"><defs><clipPath id="ud1288"><circle cx="27" cy="22.9" r="9"/></clipPath></defs>
<circle cx="27" cy="33" r="9" fill="#4ba7ba" clip-path="url(#ud1288)"/>
<circle cx="27" cy="22.9" r="7.6" fill="none" stroke="#4ba7ba" stroke-width="2.8"/>
<circle cx="27" cy="33" r="7.6" fill="none" stroke="#4ba7ba" stroke-width="2.8"/></svg>
<div class="t" style="left:3345px;top:1273.0px;font-size:28px;color:#121938;font-weight:normal;">上下合并</div>
<div style="position:absolute;left:3510px;top:1276px;width:3.9px;height:3.9px;background:#121938"></div>
<div style="position:absolute;left:3510px;top:1286px;width:3.9px;height:3.9px;background:#121938"></div>
<div style="position:absolute;left:3510px;top:1296px;width:3.9px;height:3.9px;background:#121938"></div>
<div style="position:absolute;left:3292px;top:1378px;width:250px;height:60px;background:#fff;border-radius:4px"></div>
<div style="position:absolute;left:3262px;top:1378px;width:60px;height:60px;background:#d2eaef;border-radius:50%"></div>
<svg style="left:3265px;top:1380px" width="55" height="55" viewBox="0 0 55 55"><path fill-rule="evenodd" d="M16.7 16.3 L40.8 16.3 L40.8 25.8 L16.7 25.8 Z M22.1 19.1 L38.2 19.1 L38.2 23.2 L22.1 23.2 Z" fill="#4ba7ba"/>
<path fill-rule="evenodd" d="M13 30 L27.6 30 L27.6 39.5 L13 39.5 Z M18.9 32.3 L25.2 32.3 L25.2 37.1 L18.9 37.1 Z" fill="#4ba7ba"/>
<path d="M31 29.6 L40.2 38.4 M40.2 29.6 L31 38.4" stroke="#4ba7ba" stroke-width="2.8"/></svg>
<div class="t" style="left:3345px;top:1393.0px;font-size:28px;color:#121938;font-weight:normal;">删除重复...</div>
<div style="position:absolute;left:3510px;top:1396px;width:3.9px;height:3.9px;background:#121938"></div>
<div style="position:absolute;left:3510px;top:1406px;width:3.9px;height:3.9px;background:#121938"></div>
<div style="position:absolute;left:3510px;top:1416px;width:3.9px;height:3.9px;background:#121938"></div>
<svg style="left:3290.35px;top:1488px" width="34" height="42" viewBox="0 0 34 42">
<path d="M1.8 22 L1.8 23 C1.8 34 10 40 24 40 L34 40" fill="none" stroke="#4ba7ba" stroke-width="2.3"/></svg>
<div style="position:absolute;left:3352px;top:1498px;width:190px;height:60px;background:#d2eaef;border-radius:0 4px 4px 0"></div>
<div style="position:absolute;left:3322px;top:1498px;width:60px;height:60px;background:#c4e4ea;border-radius:50%"></div>
<div class="t" style="left:3345px;top:1513.0px;font-size:28px;color:#4ba7ba;">1</div>
<div class="t" style="left:3393px;top:1514.0px;font-size:28px;color:#121938;font-weight:normal;">分析表</div>
<svg style="left:3505px;top:1522px" width="22" height="12" viewBox="0 0 22 12">
<path d="M1 1 L11.0 11 L21 1" fill="none" stroke="#5c6380" stroke-width="2.4"/></svg>
<div style="position:absolute;left:3352px;top:1618px;width:190px;height:60px;background:#fff;border-radius:4px"></div>
<div style="position:absolute;left:3322px;top:1618px;width:60px;height:60px;background:#d2eaef;border-radius:50%"></div>
<svg style="left:3325px;top:1620px" width="55" height="55" viewBox="0 0 55 55"><circle cx="27.1" cy="27.6" r="8.9" fill="none" stroke="#4ba7ba" stroke-width="2.8"/>
<path d="M27.1 14.3 L27.1 22.6 M27.1 32.8 L27.1 41.2 M13.6 27.8 L21.8 27.8 M32.3 27.8 L40.6 27.8" stroke="#4ba7ba" stroke-width="2.6"/></svg>
<div class="t" style="left:3405px;top:1634.0px;font-size:28px;color:#121938;font-weight:normal;">来源表</div>
<div style="position:absolute;left:3510px;top:1637px;width:3.9px;height:3.9px;background:#121938"></div>
<div style="position:absolute;left:3510px;top:1647px;width:3.9px;height:3.9px;background:#121938"></div>
<div style="position:absolute;left:3510px;top:1657px;width:3.9px;height:3.9px;background:#121938"></div>
<div style="position:absolute;left:3351px;top:1678px;width:2.3px;height:80px;background:#4ba7ba"></div>
<div style="position:absolute;left:3352px;top:1738px;width:190px;height:60px;background:#fff;border-radius:4px"></div>
<div style="position:absolute;left:3322px;top:1738px;width:60px;height:60px;background:#d2eaef;border-radius:50%"></div>
<div style="position:absolute;left:3243px;top:623px;width:308px;height:117px;border:6px solid #e8432d;border-radius:12px"></div>
<div style="position:absolute;left:8px;top:1690px;width:3558px;height:61px;background:linear-gradient(180deg,rgba(160,165,178,0),rgba(160,165,178,0.28));border-bottom-left-radius:26px"></div>
<div style="position:absolute;left:0px;top:1751px;width:3566px;height:3px;background:#141a26"></div>
</body></html>
